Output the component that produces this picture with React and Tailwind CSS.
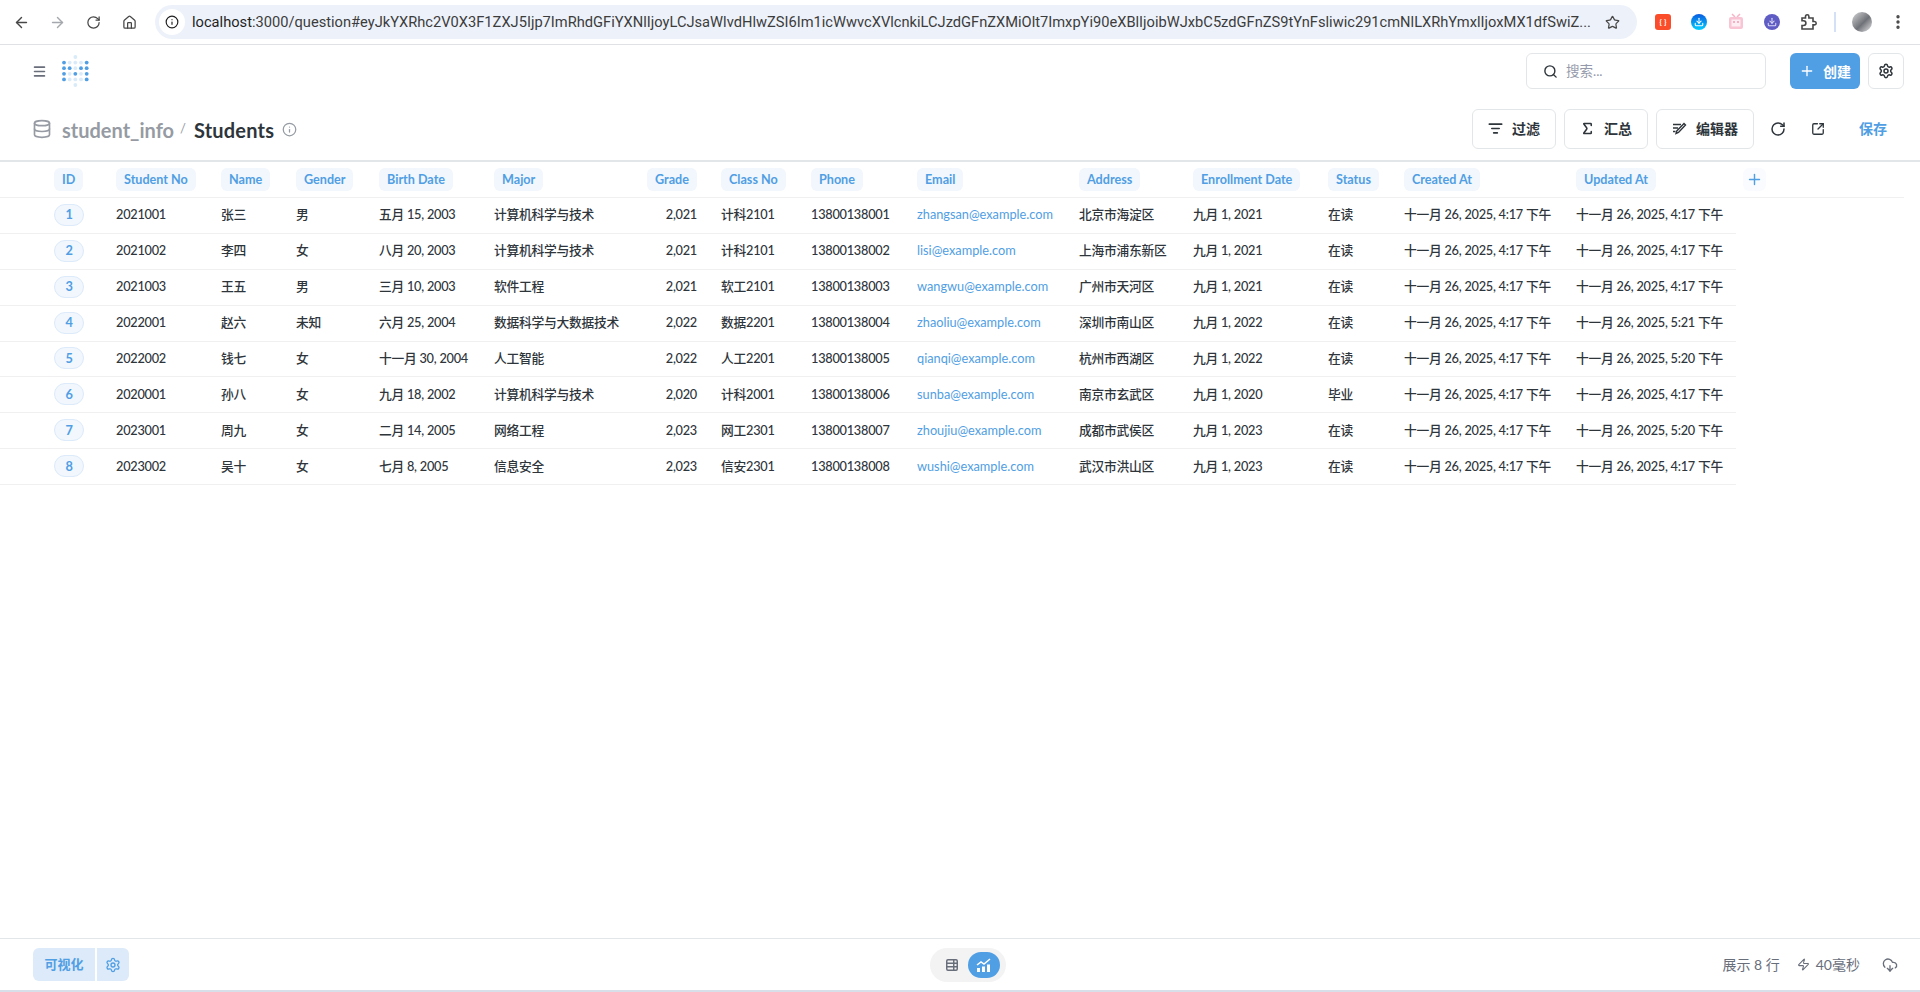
import {
  ArrowLeft,
  ArrowRight,
  RotateCw,
  Home,
  Info,
  Star,
  EllipsisVertical,
  Menu,
  Search,
  Plus,
  Settings,
  Database,
  Sigma,
  ListFilter,
  SquareArrowOutUpRight,
  TableProperties,
  Zap,
  CloudDownload,
  Download,
} from "lucide-react";

const FONT = "font-['Lato','Noto_Sans_CJK_SC',sans-serif]";

const COLS =
  "grid grid-cols-[62px_105px_75px_83px_115px_153px_74px_90px_106px_162px_114px_135px_76px_172px_160px]";

const HEADERS = [
  "ID",
  "Student No",
  "Name",
  "Gender",
  "Birth Date",
  "Major",
  "Grade",
  "Class No",
  "Phone",
  "Email",
  "Address",
  "Enrollment Date",
  "Status",
  "Created At",
  "Updated At",
];

const T1 = "十一月 26, 2025, 4:17 下午";

const ROWS = [
  ["1", "2021001", "张三", "男", "五月 15, 2003", "计算机科学与技术", "2,021", "计科2101", "13800138001", "zhangsan@example.com", "北京市海淀区", "九月 1, 2021", "在读", T1, T1],
  ["2", "2021002", "李四", "女", "八月 20, 2003", "计算机科学与技术", "2,021", "计科2101", "13800138002", "lisi@example.com", "上海市浦东新区", "九月 1, 2021", "在读", T1, T1],
  ["3", "2021003", "王五", "男", "三月 10, 2003", "软件工程", "2,021", "软工2101", "13800138003", "wangwu@example.com", "广州市天河区", "九月 1, 2021", "在读", T1, T1],
  ["4", "2022001", "赵六", "未知", "六月 25, 2004", "数据科学与大数据技术", "2,022", "数据2201", "13800138004", "zhaoliu@example.com", "深圳市南山区", "九月 1, 2022", "在读", T1, "十一月 26, 2025, 5:21 下午"],
  ["5", "2022002", "钱七", "女", "十一月 30, 2004", "人工智能", "2,022", "人工2201", "13800138005", "qianqi@example.com", "杭州市西湖区", "九月 1, 2022", "在读", T1, "十一月 26, 2025, 5:20 下午"],
  ["6", "2020001", "孙八", "女", "九月 18, 2002", "计算机科学与技术", "2,020", "计科2001", "13800138006", "sunba@example.com", "南京市玄武区", "九月 1, 2020", "毕业", T1, T1],
  ["7", "2023001", "周九", "女", "二月 14, 2005", "网络工程", "2,023", "网工2301", "13800138007", "zhoujiu@example.com", "成都市武侯区", "九月 1, 2023", "在读", T1, "十一月 26, 2025, 5:20 下午"],
  ["8", "2023002", "吴十", "女", "七月 8, 2005", "信息安全", "2,023", "信安2301", "13800138008", "wushi@example.com", "武汉市洪山区", "九月 1, 2023", "在读", T1, T1],
];

// 1 = solid dot, 0 = faded dot, null = nothing
const LOGO_DOTS = [
  [null, null, 0, null, null],
  [1, 0, 0, 0, 1],
  [1, 1, 0, 1, 1],
  [1, 0, 1, 0, 1],
  [1, 0, 0, 0, 1],
  [null, null, 0, null, null],
];

const Logo = () => (
  <svg width="27" height="32" viewBox="0 0 27 32">
    {LOGO_DOTS.map((row, y) =>
      row.map((d, x) =>
        d === null ? null : (
          <circle
            key={`${x}-${y}`}
            cx={2 + x * 5.67}
            cy={2 + y * 5.6}
            r="1.9"
            fill="#509ee3"
            opacity={d ? 1 : 0.22}
          />
        )
      )
    )}
  </svg>
);

const EditorIcon = () => (
  <svg width="15" height="15" viewBox="0 0 15 15" fill="none" stroke="#2e353b" strokeWidth="1.4">
    <path d="M1 3.5h8M1 7h5M1 10.5h2.5" />
    <path d="M12 2.5l1.5 1.5-7 7.5-2.5 1 .8-2.6z" />
  </svg>
);

const ChartIcon = () => (
  <svg width="16" height="14" viewBox="0 0 16 14" fill="none">
    <path d="M1 7l4-3 3 2 6-5" stroke="#fff" strokeWidth="1.5" />
    <rect x="1" y="10" width="3" height="4" fill="#fff" />
    <rect x="6" y="8.5" width="3" height="5.5" fill="#fff" />
    <rect x="11" y="6.5" width="3" height="7.5" fill="#fff" />
  </svg>
);

const ToolButton = ({ icon, label, width }) => (
  <button className={`${width} h-10 flex items-center justify-center gap-[9px] rounded-md border border-[#e3e6e8] bg-white text-[14px] font-bold text-[#2e353b] whitespace-nowrap`}>
    {icon}
    {label}
  </button>
);

const ExtensionIcons = () => (
  <div className="flex items-center">
    <div className="w-4 h-4 rounded-[3px] bg-[#fb4d2a] text-white text-[8px] font-bold flex items-center justify-center ml-[18px]">
      {"{ }"}
    </div>
    <div className="w-4 h-4 rounded-full bg-[linear-gradient(180deg,#0a5be0,#00d0ff)] ml-5 flex items-center justify-center">
      <Download size={10} color="#fff" strokeWidth={2.5} />
    </div>
    <svg width="16" height="18" viewBox="0 0 16 18" className="ml-[21px]">
      <path d="M4 1l3 3M12 1L9 4" stroke="#f6b5c8" strokeWidth="1.5" />
      <rect x="1" y="4" width="14" height="12" rx="2" fill="#f9c5d5" />
      <rect x="3.5" y="6.5" width="9" height="7" fill="#fdeef3" />
      <circle cx="6" cy="9" r="1" fill="#f59ab5" />
      <circle cx="10" cy="9" r="1" fill="#f59ab5" />
    </svg>
    <div className="w-4 h-4 rounded-full bg-[#5f5cc4] ml-5 flex items-center justify-center">
      <Download size={10} color="#d8d8f5" strokeWidth={2.5} />
    </div>
    <svg width="16" height="17" viewBox="0 0 16 17" fill="none" stroke="#474747" strokeWidth="1.6" className="ml-[21px]">
      <path d="M1 4h3.5V2.5a1.7 1.7 0 013.4 0V4H12v3.5h1.5a1.7 1.7 0 010 3.4H12V15H1v-3.5h1.5a2.4 2.4 0 000-4.8H1z" />
    </svg>
    <div className="w-[2px] h-5 bg-[#d3e0f5] ml-[17px]" />
    <div className="w-5 h-5 rounded-full bg-[linear-gradient(135deg,#d6d6d8,#6f7278_55%,#e6e6e8)] ml-4" />
    <EllipsisVertical size={18} color="#474747" strokeWidth={2.5} className="ml-[17px]" />
  </div>
);

const BrowserBar = () => (
  <div className="h-[45px] shrink-0 border-b border-[#dfe1e5] bg-white flex items-center pl-[13px] text-[#474747]">
    <ArrowLeft size={17} />
    <ArrowRight size={17} color="#a5a8ad" className="ml-[19px]" />
    <RotateCw size={15} className="ml-[20px]" />
    <Home size={15} className="ml-[21px]" />
    <div className="ml-[18px] w-[1482px] h-[34px] rounded-full bg-[#edf2fa] flex items-center pl-[4px] pr-[17px] font-['Roboto','Liberation_Sans',sans-serif]">
      <div className="w-[26px] h-[26px] rounded-full bg-white flex items-center justify-center shrink-0">
        <Info size={14} color="#1f1f1f" />
      </div>
      <div className="ml-[7px] flex-1 min-w-0 text-[14.67px] whitespace-nowrap overflow-hidden text-[#1f1f1f]">
        localhost<span className="text-[#3c3c3c]">:3000/question#eyJkYXRhc2V0X3F1ZXJ5Ijp7ImRhdGFiYXNlIjoyLCJsaWlvdHlwZSI6Im1icWwvcXVlcnkiLCJzdGFnZXMiOlt7ImxpYi90eXBlIjoibWJxbC5zdGFnZS9tYnFsliwic291cmNlLXRhYmxlIjoxMX1dfSwiZ...</span>
      </div>
      <Star size={15} color="#474747" className="ml-2 shrink-0" />
    </div>
    <ExtensionIcons />
  </div>
);

const AppNav = () => (
  <div className="h-[52px] shrink-0 bg-white flex items-center pl-[32px] pr-4">
    <Menu size={15} color="#696e7b" strokeWidth={2.5} />
    <div className="ml-[15px] flex">
      <Logo />
    </div>
    <div className="ml-auto flex items-center">
      <div className="w-[240px] h-9 rounded-md border border-[#e3e6e8] flex items-center pl-4 gap-2 text-[13.5px] text-[#949aab]">
        <Search size={15} color="#2e353b" strokeWidth={2.25} />
        搜索...
      </div>
      <button className="ml-6 w-[70px] h-9 rounded-md bg-[#509ee3] text-white text-[14px] font-bold flex items-center justify-center gap-[8px]">
        <Plus size={16} />
        创建
      </button>
      <button className="ml-2 w-9 h-9 rounded-md border border-[#e3e6e8] flex items-center justify-center">
        <Settings size={16} color="#2e353b" strokeWidth={2.25} />
      </button>
    </div>
  </div>
);

const QuestionBar = () => (
  <div className="h-[65px] shrink-0 border-b-2 border-[#e3e6e8] flex items-center pl-[32px] pr-[33px]">
    <Database size={20} color="#969ba3" />
    <span className="ml-[10px] mt-[2px] text-[20px] font-bold text-[#969ba3]">student_info</span>
    <span className="ml-[6px] text-[13px] text-[#969ba3]">/</span>
    <span className="ml-[8px] mt-[2px] text-[20px] font-bold tracking-[0.2px] text-[#2e353b]">Students</span>
    <Info size={15} color="#969ba3" className="ml-[8px] mt-[2px]" />
    <div className="ml-auto flex items-center">
      <div className="flex items-center gap-2">
        <ToolButton width="w-[84px]" icon={<ListFilter size={15} strokeWidth={2.5} />} label="过滤" />
        <ToolButton width="w-[84px]" icon={<Sigma size={15} strokeWidth={2.5} />} label="汇总" />
        <ToolButton width="w-[98px]" icon={<EditorIcon />} label="编辑器" />
      </div>
      <RotateCw size={16} color="#2e353b" strokeWidth={2.25} className="ml-4" />
      <SquareArrowOutUpRight size={14} color="#2e353b" strokeWidth={2.25} className="ml-[25px]" />
      <span className="ml-[34px] text-[14px] font-bold text-[#509ee3]">保存</span>
    </div>
  </div>
);

const HeaderCell = ({ label, right }) => (
  <div className={right ? "flex justify-end pr-6" : "flex"}>
    <span className="h-[23px] px-2 pt-px rounded-md bg-[#f1f7fd] text-[#509ee3] text-[12.6px] font-bold flex items-center whitespace-nowrap">
      {label}
    </span>
  </div>
);

const DataTable = () => (
  <div className="flex-1 min-h-0 bg-white">
    <div className="w-[1904px] h-9 border-b border-[#f0f0f0] pl-[54px] flex items-center">
      <div className={`${COLS} items-center`}>
        {HEADERS.map((h, i) => (
          <HeaderCell key={h} label={h} right={i === 6} />
        ))}
      </div>
      <span className="ml-[7px] w-[23px] h-[23px] rounded-md bg-[#f9fbfe] flex items-center justify-center">
        <Plus size={17} color="#509ee3" />
      </span>
    </div>
    {ROWS.map((row) => (
      <div
        key={row[0]}
        className={`${COLS} w-[1736px] h-[35.875px] pb-px items-center border-b border-[#f0f0f0] pl-[54px] text-[12.75px] font-medium tracking-[-0.25px] text-[#2e353b] whitespace-nowrap`}
      >
        {row.map((cell, i) => {
          if (i === 0) {
            return (
              <div key={i}>
                <span className="w-[30px] h-[22px] rounded-full border border-[#dceafa] bg-[#f1f7fd] text-[#509ee3] font-bold flex items-center justify-center">
                  {cell}
                </span>
              </div>
            );
          }
          if (i === 6) {
            return <div key={i} className="text-right pr-6">{cell}</div>;
          }
          if (i === 9) {
            return <div key={i} className="text-[#509ee3] font-normal tracking-normal">{cell}</div>;
          }
          return <div key={i}>{cell}</div>;
        })}
      </div>
    ))}
  </div>
);

const Footer = () => (
  <div className="h-[52px] shrink-0 border-t border-[#e3e6e8] bg-white flex items-center pl-[33px] pr-[22px]">
    <div className="flex gap-[2px]">
      <button className="w-[62px] h-[33px] rounded-l-md bg-[#dceafa] text-[#509ee3] text-[13px] font-bold">可视化</button>
      <button className="w-8 h-[33px] rounded-r-md bg-[#dceafa] flex items-center justify-center">
        <Settings size={16} color="#509ee3" />
      </button>
    </div>
    <div className="ml-[801px] w-[76px] h-[34px] rounded-full bg-[#f3f3f3] flex items-center pl-[15px] pr-[6px] justify-between">
      <TableProperties size={14} color="#696e7b" strokeWidth={2.5} />
      <span className="w-8 h-[26px] rounded-full bg-[#509ee3] flex items-center justify-center">
        <ChartIcon />
      </span>
    </div>
    <div className="ml-auto flex items-center text-[14px] text-[#696e7b]">
      <span>展示 8 行</span>
      <Zap size={13} className="ml-[17px]" />
      <span className="ml-[6px]">40毫秒</span>
      <CloudDownload size={16} className="ml-[22px]" />
    </div>
  </div>
);

export default function App() {
  return (
    <div className={`${FONT} w-[1920px] h-[992px] overflow-hidden flex flex-col bg-white`}>
      <BrowserBar />
      <AppNav />
      <QuestionBar />
      <DataTable />
      <Footer />
      <div className="h-[2px] shrink-0 bg-[#d8dfe8]" />
    </div>
  );
}
